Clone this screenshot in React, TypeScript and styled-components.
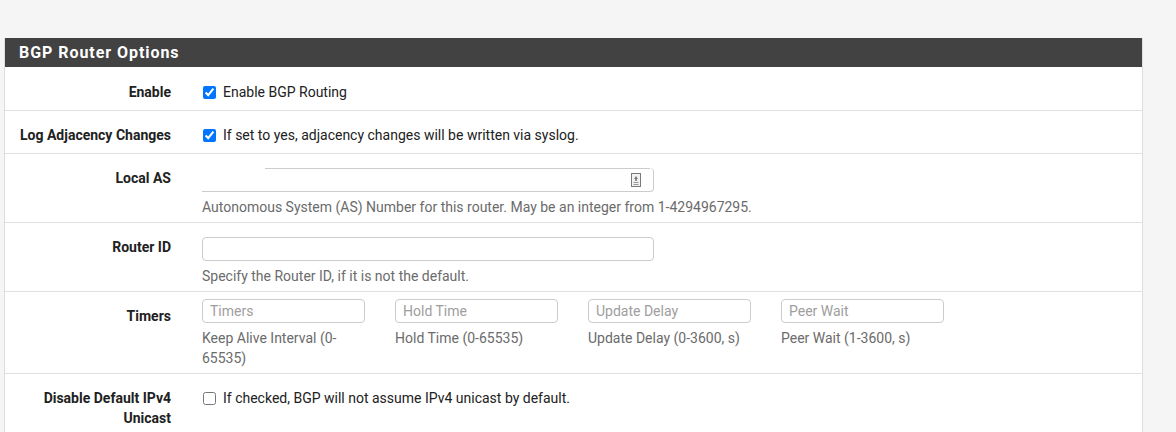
import React from "react";
import styled, { createGlobalStyle } from "styled-components";

const Global = createGlobalStyle`
  html, body { margin: 0; padding: 0; background: #f5f5f5; }
  body { font-family: Roboto, "Noto Sans", sans-serif; font-size: 14px; color: #212121; }
  * { box-sizing: border-box; }
`;

const Page = styled.div`
  padding: 38px 33px 0 4px;
  width: 1176px;
  height: 432px;
  overflow: hidden;
`;

const Panel = styled.section`
  border: 1px solid #dddddd;
  border-top: none;
  background: #ffffff;
`;

const Heading = styled.h2`
  margin: 0;
  height: 29px;
  background: #424242;
  color: #ffffff;
  font-size: 16px;
  font-weight: 700;
  letter-spacing: 0.95px;
  line-height: 29px;
  padding-left: 14px;
`;

const Row = styled.div<{ $top: number; $bottom: number }>`
  display: grid;
  grid-template-columns: 166px 1fr;
  align-items: start;
  column-gap: 31px;
  padding: ${(p) => p.$top}px 0 ${(p) => p.$bottom}px;
  border-bottom: 1px solid #e0e0e0;
`;

const Label = styled.div<{ $top?: number }>`
  text-align: right;
  font-weight: 700;
  line-height: 20px;
  color: #212121;
  padding-top: ${(p) => p.$top ?? 0}px;
`;

const Check = styled.label`
  display: flex;
  align-items: center;
  gap: 7px;
  line-height: 20px;
  color: #212121;
  input {
    margin: 0 0 0 1px;
    width: 13px;
    height: 13px;
    accent-color: #0075ff;
  }
`;

const Field = styled.div`
  position: relative;
  width: 452px;
  height: 24px;
`;

const TextInput = styled.input<{ $width?: number }>`
  display: block;
  width: ${(p) => p.$width ?? 452}px;
  height: 24px;
  border: 1px solid #cccccc;
  border-radius: 4px;
  padding: 0 7px;
  font-family: Roboto, sans-serif;
  font-size: 14px;
  color: #212121;
  outline: none;
  &::placeholder { color: #9e9e9e; }
`;

const BrokenInput = styled(TextInput)`
  border-left: none;
  border-top: none;
  border-top-left-radius: 0;
  border-bottom-left-radius: 0;
`;

const TopLine = styled.span`
  position: absolute;
  left: 63px;
  right: 4px;
  top: 0;
  height: 1px;
  background: #cccccc;
  pointer-events: none;
`;

const FieldIcon = styled.svg`
  position: absolute;
  right: 12px;
  top: 4px;
  pointer-events: none;
`;

const Help = styled.div`
  margin-top: 5px;
  line-height: 20px;
  color: #6b6b6b;
`;

const TimerGrid = styled.div`
  display: grid;
  grid-template-columns: repeat(4, 163px);
  column-gap: 30px;
`;

const timers = [
  { ph: "Timers", help: "Keep Alive Interval (0-65535)" },
  { ph: "Hold Time", help: "Hold Time (0-65535)" },
  { ph: "Update Delay", help: "Update Delay (0-3600, s)" },
  { ph: "Peer Wait", help: "Peer Wait (1-3600, s)" },
];

export default function App() {
  return (
    <>
      <Global />
      <Page>
        <Panel>
          <Heading>BGP Router Options</Heading>

          <Row $top={15} $bottom={8}>
            <Label>Enable</Label>
            <Check>
              <input type="checkbox" defaultChecked />
              Enable BGP Routing
            </Check>
          </Row>

          <Row $top={14} $bottom={8}>
            <Label>Log Adjacency Changes</Label>
            <Check>
              <input type="checkbox" defaultChecked />
              If set to yes, adjacency changes will be written via syslog.
            </Check>
          </Row>

          <Row $top={14} $bottom={5}>
            <Label>Local AS</Label>
            <div>
              <Field>
                <BrokenInput type="text" />
                <TopLine />
                <FieldIcon width="12" height="16" viewBox="0 0 12 16">
                  <rect x="1.5" y="1.5" width="9" height="13" fill="#f2f2f2" stroke="#7a7a7a" />
                  <path d="M6 4 L8 7 L4 7 Z" fill="#7a7a7a" />
                  <rect x="5.2" y="7" width="1.6" height="2" fill="#7a7a7a" />
                  <rect x="3.5" y="10" width="5" height="1" fill="#9a9a9a" />
                  <rect x="3.5" y="12" width="5" height="1" fill="#9a9a9a" />
                </FieldIcon>
              </Field>
              <Help>Autonomous System (AS) Number for this router. May be an integer from 1-4294967295.</Help>
            </div>
          </Row>

          <Row $top={14} $bottom={5}>
            <Label>Router ID</Label>
            <div>
              <TextInput type="text" />
              <Help>Specify the Router ID, if it is not the default.</Help>
            </div>
          </Row>

          <Row $top={7} $bottom={5}>
            <Label $top={7}>Timers</Label>
            <TimerGrid>
              {timers.map((t) => (
                <div key={t.ph}>
                  <TextInput type="text" placeholder={t.ph} $width={163} />
                  <Help>{t.help}</Help>
                </div>
              ))}
            </TimerGrid>
          </Row>

          <Row $top={14} $bottom={10}>
            <Label>
              Disable Default IPv4
              <br />
              Unicast
            </Label>
            <Check>
              <input type="checkbox" />
              If checked, BGP will not assume IPv4 unicast by default.
            </Check>
          </Row>
        </Panel>
      </Page>
    </>
  );
}
